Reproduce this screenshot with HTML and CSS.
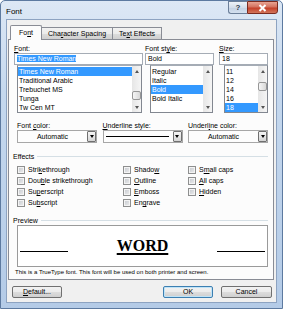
FILE: index.html
```html
<!DOCTYPE html>
<html lang="en">
<head>
    <meta charset="UTF-8">
    <meta name="viewport" content="width=device-width, initial-scale=1.0">
    <title>Font</title>
    <link rel="stylesheet" href="styles.css">
</head>
<body>
    <div class="window">
        <div class="titlebar">
            <span class="title">Font</span>
            <div class="caption">
                <span class="cap-btn help">?</span>
                <span class="cap-btn close">
                    <svg width="9" height="8" viewBox="0 0 9 8"><path d="M1.5 1 L7.5 7 M7.5 1 L1.5 7" stroke="#fff" stroke-width="2"/></svg>
                </span>
            </div>
        </div>

        <div class="client">
            <div class="tabs">
                <div class="tab active">Fo<u>n</u>t</div>
                <div class="tab">Cha<u>r</u>acter Spacing</div>
                <div class="tab">Te<u>x</u>t Effects</div>
            </div>

            <div class="panel">
                <div class="pickers">
                    <div class="picker font-pick">
                        <div class="label"><u>F</u>ont:</div>
                        <div class="field"><span class="hl">Times New Roman</span></div>
                        <div class="list">
                            <ul>
                                <li class="sel">Times New Roman</li>
                                <li>Traditional Arabic</li>
                                <li>Trebuchet MS</li>
                                <li>Tunga</li>
                                <li>Tw Cen MT</li>
                            </ul>
                            <div class="scroll">
                                <span class="arrow"><i class="tri up"></i></span>
                                <span class="track"><span class="thumb"></span></span>
                                <span class="arrow"><i class="tri down"></i></span>
                            </div>
                        </div>
                    </div>

                    <div class="picker style-pick">
                        <div class="label">Font st<u>y</u>le:</div>
                        <div class="field">Bold</div>
                        <div class="list">
                            <ul>
                                <li>Regular</li>
                                <li>Italic</li>
                                <li class="sel">Bold</li>
                                <li>Bold Italic</li>
                            </ul>
                            <div class="scroll">
                                <span class="arrow"><i class="tri up"></i></span>
                                <span class="track"></span>
                                <span class="arrow"><i class="tri down"></i></span>
                            </div>
                        </div>
                    </div>

                    <div class="picker size-pick">
                        <div class="label"><u>S</u>ize:</div>
                        <div class="field">18</div>
                        <div class="list">
                            <ul>
                                <li>11</li>
                                <li>12</li>
                                <li>14</li>
                                <li>16</li>
                                <li class="sel">18</li>
                            </ul>
                            <div class="scroll">
                                <span class="arrow"><i class="tri up"></i></span>
                                <span class="track"><span class="thumb"></span></span>
                                <span class="arrow"><i class="tri down"></i></span>
                            </div>
                        </div>
                    </div>
                </div>

                <div class="combos">
                    <div class="combo-col">
                        <div class="label">Font <u>c</u>olor:</div>
                        <div class="combo">
                            <span class="combo-val">Automatic</span>
                            <span class="drop"><i class="tri down dark"></i></span>
                        </div>
                    </div>
                    <div class="combo-col">
                        <div class="label"><u>U</u>nderline style:</div>
                        <div class="combo">
                            <span class="combo-line"></span>
                            <span class="drop"><i class="tri down dark"></i></span>
                        </div>
                    </div>
                    <div class="combo-col">
                        <div class="label">Underl<u>i</u>ne color:</div>
                        <div class="combo">
                            <span class="combo-val">Automatic</span>
                            <span class="drop"><i class="tri down dark"></i></span>
                        </div>
                    </div>
                </div>

                <div class="group">
                    <div class="group-head">Effects</div>
                    <div class="checks">
                        <div class="check"><span class="box"></span>Stri<u>k</u>ethrough</div>
                        <div class="check"><span class="box"></span>Shado<u>w</u></div>
                        <div class="check"><span class="box"></span>S<u>m</u>all caps</div>

                        <div class="check"><span class="box"></span>Dou<u>b</u>le strikethrough</div>
                        <div class="check"><span class="box"></span><u>O</u>utline</div>
                        <div class="check"><span class="box"></span><u>A</u>ll caps</div>

                        <div class="check"><span class="box"></span>Su<u>p</u>erscript</div>
                        <div class="check"><span class="box"></span><u>E</u>mboss</div>
                        <div class="check"><span class="box"></span><u>H</u>idden</div>

                        <div class="check"><span class="box"></span>Su<u>b</u>script</div>
                        <div class="check"><span class="box"></span>En<u>g</u>rave</div>
                    </div>
                </div>

                <div class="group preview-group">
                    <div class="group-head">Preview</div>
                    <div class="preview">
                        <span class="rule"></span>
                        <span class="sample">WORD</span>
                        <span class="rule"></span>
                    </div>
                </div>

                <p class="note">This is a TrueType font. This font will be used on both printer and screen.</p>
            </div>

            <div class="actions">
                <button class="btn"><u>D</u>efault...</button>
                <button class="btn ok">OK</button>
                <button class="btn cancel">Cancel</button>
            </div>
        </div>
    </div>
</body>
</html>
```

FILE: styles.css
```css
* {
    box-sizing: border-box;
}

body {
    margin: 0;
    font-family: "Liberation Sans", Arial, sans-serif;
    font-size: 7px;
    color: #000;
    background: #fff;
}

u {
    text-decoration: underline;
    text-underline-offset: 1px;
}

/* window frame */
.window {
    width: 283px;
    height: 309px;
    display: flex;
    flex-direction: column;
    border: 1px solid #5d7aa0;
    border-radius: 5px 5px 0 0;
    background: linear-gradient(#dde8f5, #c5d8ee 30%, #b4cbe7);
}

.titlebar {
    height: 18px;
    display: flex;
    justify-content: space-between;
    align-items: flex-start;
}

.title {
    font-size: 8px;
    line-height: 9px;
    padding: 6px 0 0 5px;
}

.caption {
    display: flex;
    margin-right: 4px;
}

.cap-btn {
    height: 13px;
    display: flex;
    align-items: center;
    justify-content: center;
    border: 1px solid #6b7f99;
}

.help {
    width: 19px;
    border-right: none;
    border-radius: 0 0 0 3px;
    background: linear-gradient(#eef3f9, #d4deeb 50%, #c3d1e3 51%, #d3e0ef);
    font-size: 8px;
    font-weight: bold;
    color: #303c4c;
}

.close {
    width: 31px;
    border-color: #7a2b20;
    border-radius: 0 0 3px 0;
    background: linear-gradient(#e8a493, #d4725f 45%, #c4412a 55%, #d2755a);
}

/* dialog body */
.client {
    flex: 1;
    margin: 0 5px 5px;
    display: flex;
    flex-direction: column;
    background: #f0f0f0;
    border: 1px solid #8da3c1;
}

.tabs {
    display: flex;
    align-items: flex-end;
    padding: 5px 0 0 3px;
}

.tab {
    height: 12px;
    line-height: 11px;
    padding: 0 6px;
    border: 1px solid #898c95;
    border-bottom: none;
    background: linear-gradient(#f2f2f2, #ebebeb 50%, #dddddd 51%, #cfcfcf);
    white-space: nowrap;
}

.tab + .tab {
    margin-left: -1px;
}

.tab.active {
    position: relative;
    height: 15px;
    line-height: 13px;
    margin-bottom: -1px;
    padding: 0 8px;
    background: #fcfcfc;
    border-radius: 2px 2px 0 0;
}

.tab.active + .tab {
    margin-left: 0;
    border-left: none;
}

.panel {
    margin: 0 2px 0 1px;
    padding: 4px 5px 3px 4px;
    border: 1px solid #898c95;
    background: #fcfcfc;
}

.label {
    height: 9px;
    line-height: 9px;
    white-space: nowrap;
}

/* font / style / size pickers */
.pickers {
    display: flex;
    margin-left: 1px;
}

.picker {
    display: flex;
    flex-direction: column;
    flex-shrink: 0;
}

.font-pick {
    width: 129px;
    margin-right: 2px;
}

.style-pick {
    width: 69px;
    margin-right: 5px;
}

.size-pick {
    width: 49px;
}

.field {
    height: 12px;
    line-height: 10px;
    padding-left: 2px;
    border: 1px solid #a5acb5;
    background: #fff;
    white-space: nowrap;
}

.hl {
    background: #3399ff;
    color: #fff;
}

.list {
    display: flex;
    height: 48px;
    border: 1px solid #828790;
    border-top-color: #a5acb5;
    background: #fff;
}

.font-pick .list {
    margin: 0 1px 0 3px;
}

.style-pick .list {
    margin: 0 1px 0 5px;
}

.size-pick .list {
    margin-left: 5px;
}

.list ul {
    flex: 1;
    margin: 0;
    padding: 1px 0 0;
    list-style: none;
    overflow: hidden;
}

.list li {
    line-height: 9px;
    padding-left: 1px;
    white-space: nowrap;
}

.list li.sel {
    background: #3399ff;
    color: #fff;
}

.scroll {
    width: 9px;
    display: flex;
    flex-direction: column;
    background: linear-gradient(90deg, #e6e6e6, #f5f5f5);
}

.arrow {
    height: 10px;
    display: flex;
    align-items: center;
    justify-content: center;
}

.track {
    flex: 1;
}

.thumb {
    display: block;
    height: 9px;
    border: 1px solid #979797;
    border-radius: 2px;
    background: linear-gradient(90deg, #f6f6f6, #d8d8d8);
}

.font-pick .thumb {
    margin-top: 15px;
}

.size-pick .thumb {
    margin-top: 6px;
}

.tri {
    width: 1px;
    height: 0;
    border-left: 2px solid transparent;
    border-right: 2px solid transparent;
}

.tri.up {
    border-bottom: 3px solid #555;
}

.tri.down {
    border-top: 3px solid #555;
}

.tri.dark {
    border-top-color: #000;
}

/* colour / underline combos */
.combos {
    display: flex;
    justify-content: space-between;
    margin: 8px 0 0 4px;
}

.combo-col {
    width: 80px;
}

.combo {
    height: 13px;
    display: flex;
    align-items: stretch;
    border: 1px solid #a7a7a7;
    background: #fdfdfd;
}

.combo-val {
    flex: 1;
    line-height: 11px;
    text-align: center;
}

.combo-line {
    flex: 1;
    height: 1px;
    margin: 5px 4px 0 2px;
    background: #000;
}

.drop {
    width: 9px;
    display: flex;
    align-items: center;
    justify-content: center;
    border: 1px solid #707070;
    border-radius: 1px;
    background: linear-gradient(#f4f4f4, #e6e6e6 50%, #d4d4d4);
}

/* effects and preview */
.group {
    margin-top: 9px;
}

.preview-group {
    margin-top: 8px;
}

.group-head {
    display: flex;
    align-items: center;
    height: 9px;
    line-height: 9px;
}

.group-head::after {
    content: "";
    flex: 1;
    margin-left: 3px;
    border-top: 1px solid #d5dfe5;
}

.checks {
    display: grid;
    grid-template-columns: 106px 65px 1fr;
    grid-auto-rows: 11px;
    margin: 3px 0 0 4px;
}

.check {
    display: flex;
    align-items: center;
    white-space: nowrap;
}

.box {
    width: 8px;
    height: 8px;
    flex-shrink: 0;
    margin-right: 3px;
    border: 1px solid #8e8f8f;
    box-shadow: inset 0 0 0 1px #f4f4f4;
    background: linear-gradient(135deg, #c4c8ce, #eeeeee);
}

.preview {
    height: 42px;
    margin-left: 4px;
    padding: 0 2px;
    display: flex;
    align-items: center;
    justify-content: space-between;
    border: 1px solid #9a9a9a;
    background: #fff;
}

.rule {
    width: 48px;
    height: 1px;
    margin-top: 10px;
    background: #000;
}

.sample {
    font-family: "Liberation Serif", "Times New Roman", serif;
    font-size: 16px;
    font-weight: bold;
    line-height: 16px;
    text-decoration: underline;
    text-decoration-thickness: 2px;
    text-underline-offset: 2px;
}

.note {
    margin: 2px 0 0 2px;
    font-size: 6px;
    line-height: 7px;
    white-space: nowrap;
}

/* bottom buttons */
.actions {
    display: flex;
    margin-top: 6px;
    padding: 0 4px 0 5px;
}

.btn {
    width: 50px;
    height: 12px;
    padding: 0;
    font: inherit;
    line-height: 10px;
    color: #000;
    border: 1px solid #707070;
    border-radius: 2px;
    background: linear-gradient(#f2f2f2, #ebebeb 50%, #dddddd 51%, #cfcfcf);
}

.ok {
    margin-left: auto;
    border-color: #3c7fb1;
    box-shadow: inset 0 0 0 1px #bfe3f7;
}

.cancel {
    width: 51px;
    margin-left: 8px;
}
```
